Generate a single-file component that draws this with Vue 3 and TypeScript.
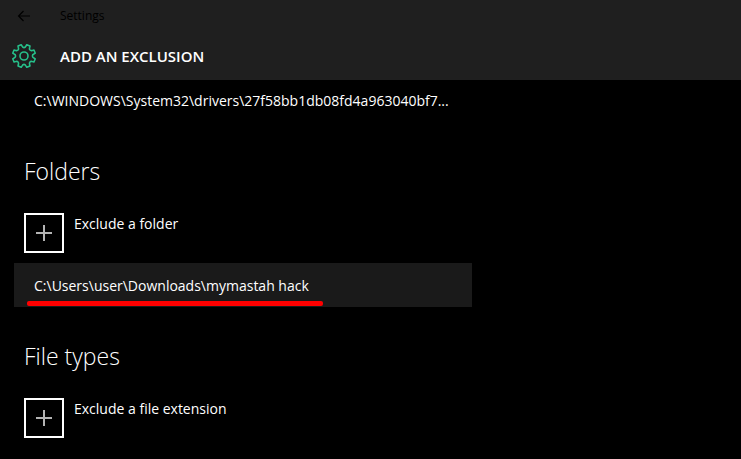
<script setup lang="ts">
interface Section {
  title: string
  action: string
  entries: string[]
}

const recentFile = 'C:\\WINDOWS\\System32\\drivers\\27f58bb1db08fd4a963040bf7...'

const sections: Section[] = [
  {
    title: 'Folders',
    action: 'Exclude a folder',
    entries: ['C:\\Users\\user\\Downloads\\mymastah hack'],
  },
  { title: 'File types', action: 'Exclude a file extension', entries: [] },
]

// Outline of an eight-toothed gear around the centre of a 26x26 box.
function gearOutline(): string {
  const point = (radius: number, degrees: number): string => {
    const a = (degrees * Math.PI) / 180
    return `${(13 + radius * Math.sin(a)).toFixed(2)} ${(13 - radius * Math.cos(a)).toFixed(2)}`
  }
  let d = `M${point(11.6, 13)}`
  for (let i = 0; i < 8; i++) {
    const c = i * 45
    d += `L${point(11.6, c + 31)}`
    d += `L${point(10, c + 34)}`
    d += `C${point(8, c + 38)} ${point(8, c + 52)} ${point(10, c + 56)}`
    d += `L${point(11.6, c + 59)}`
  }
  return d + 'Z'
}

const gear = gearOutline()
</script>

<template>
  <div class="window">
    <header class="header">
      <div class="titlebar">
        <button class="back" type="button" aria-label="Back">
          <svg width="14" height="12" viewBox="0 0 14 12" fill="none" stroke="currentColor" stroke-width="1.2">
            <path d="M13 6H1.5M6.5 1L1.5 6L6.5 11" />
          </svg>
        </button>
        <span class="app-name">Settings</span>
      </div>
      <div class="page-title">
        <svg class="gear" width="26" height="26" viewBox="0 0 26 26" fill="none" stroke="currentColor" stroke-width="1.6" stroke-linejoin="round">
          <path :d="gear" />
          <circle cx="13" cy="13" r="4" />
        </svg>
        <h1>ADD AN EXCLUSION</h1>
      </div>
    </header>

    <main class="content">
      <div class="entry">{{ recentFile }}</div>

      <section v-for="section in sections" :key="section.title" class="section">
        <h2>{{ section.title }}</h2>
        <button class="add" type="button">
          <span class="add-box">
            <svg width="16" height="16" viewBox="0 0 16 16" fill="none" stroke="currentColor" stroke-width="2">
              <path d="M0 8H16M8 0V16" />
            </svg>
          </span>
          <span class="add-label">{{ section.action }}</span>
        </button>
        <div v-for="entry in section.entries" :key="entry" class="entry selected">
          <span>{{ entry }}</span>
          <i class="marker"></i>
        </div>
      </section>
    </main>
  </div>
</template>

<style>
body {
  margin: 0;
  background: #000;
}
</style>

<style scoped>
.window {
  min-height: 100vh;
  box-sizing: border-box;
  background: #000;
  color: #fff;
  font-family: "Segoe UI", "Open Sans", "Noto Sans", sans-serif;
  font-size: 14px;
  line-height: 20px;
}

.header {
  background: #1f1f1f;
}

.titlebar {
  display: flex;
  align-items: center;
  height: 32px;
  color: #000;
}

.back {
  display: flex;
  align-items: center;
  justify-content: center;
  width: 48px;
  height: 32px;
  padding: 0;
  border: 0;
  background: none;
  color: inherit;
}

.app-name {
  margin-left: 12px;
  font-size: 12px;
}

.page-title {
  display: flex;
  align-items: center;
  gap: 23px;
  height: 48px;
  padding-left: 11px;
}

.gear {
  color: #26c08a;
}

h1 {
  margin: 0;
  font-size: 15px;
  font-weight: 600;
}

/* The list is scrolled slightly under the header. */
.content {
  margin-top: -2px;
  padding: 0 14px;
}

.entry {
  position: relative;
  box-sizing: border-box;
  max-width: 458px;
  height: 44px;
  padding: 13px 0 11px 20px;
  white-space: nowrap;
}

.selected {
  margin-top: 10px;
  background: #1a1a1a;
}

.marker {
  position: absolute;
  left: 13px;
  bottom: 1px;
  width: 296px;
  height: 5px;
  border-radius: 2px;
  background: #f00;
}

.section {
  padding-top: 33px;
}

h2 {
  margin: 0 0 26px 10px;
  font-size: 23px;
  font-weight: 300;
  line-height: 32px;
}

.add {
  display: flex;
  gap: 10px;
  margin-left: 10px;
  padding: 0;
  border: 0;
  background: none;
  color: inherit;
  font: inherit;
}

.add-label {
  line-height: 22px;
}

.add-box {
  display: flex;
  align-items: center;
  justify-content: center;
  box-sizing: border-box;
  width: 40px;
  height: 40px;
  border: 2px solid #fff;
}

.add-box svg {
  color: #b4b4b4;
}
</style>
